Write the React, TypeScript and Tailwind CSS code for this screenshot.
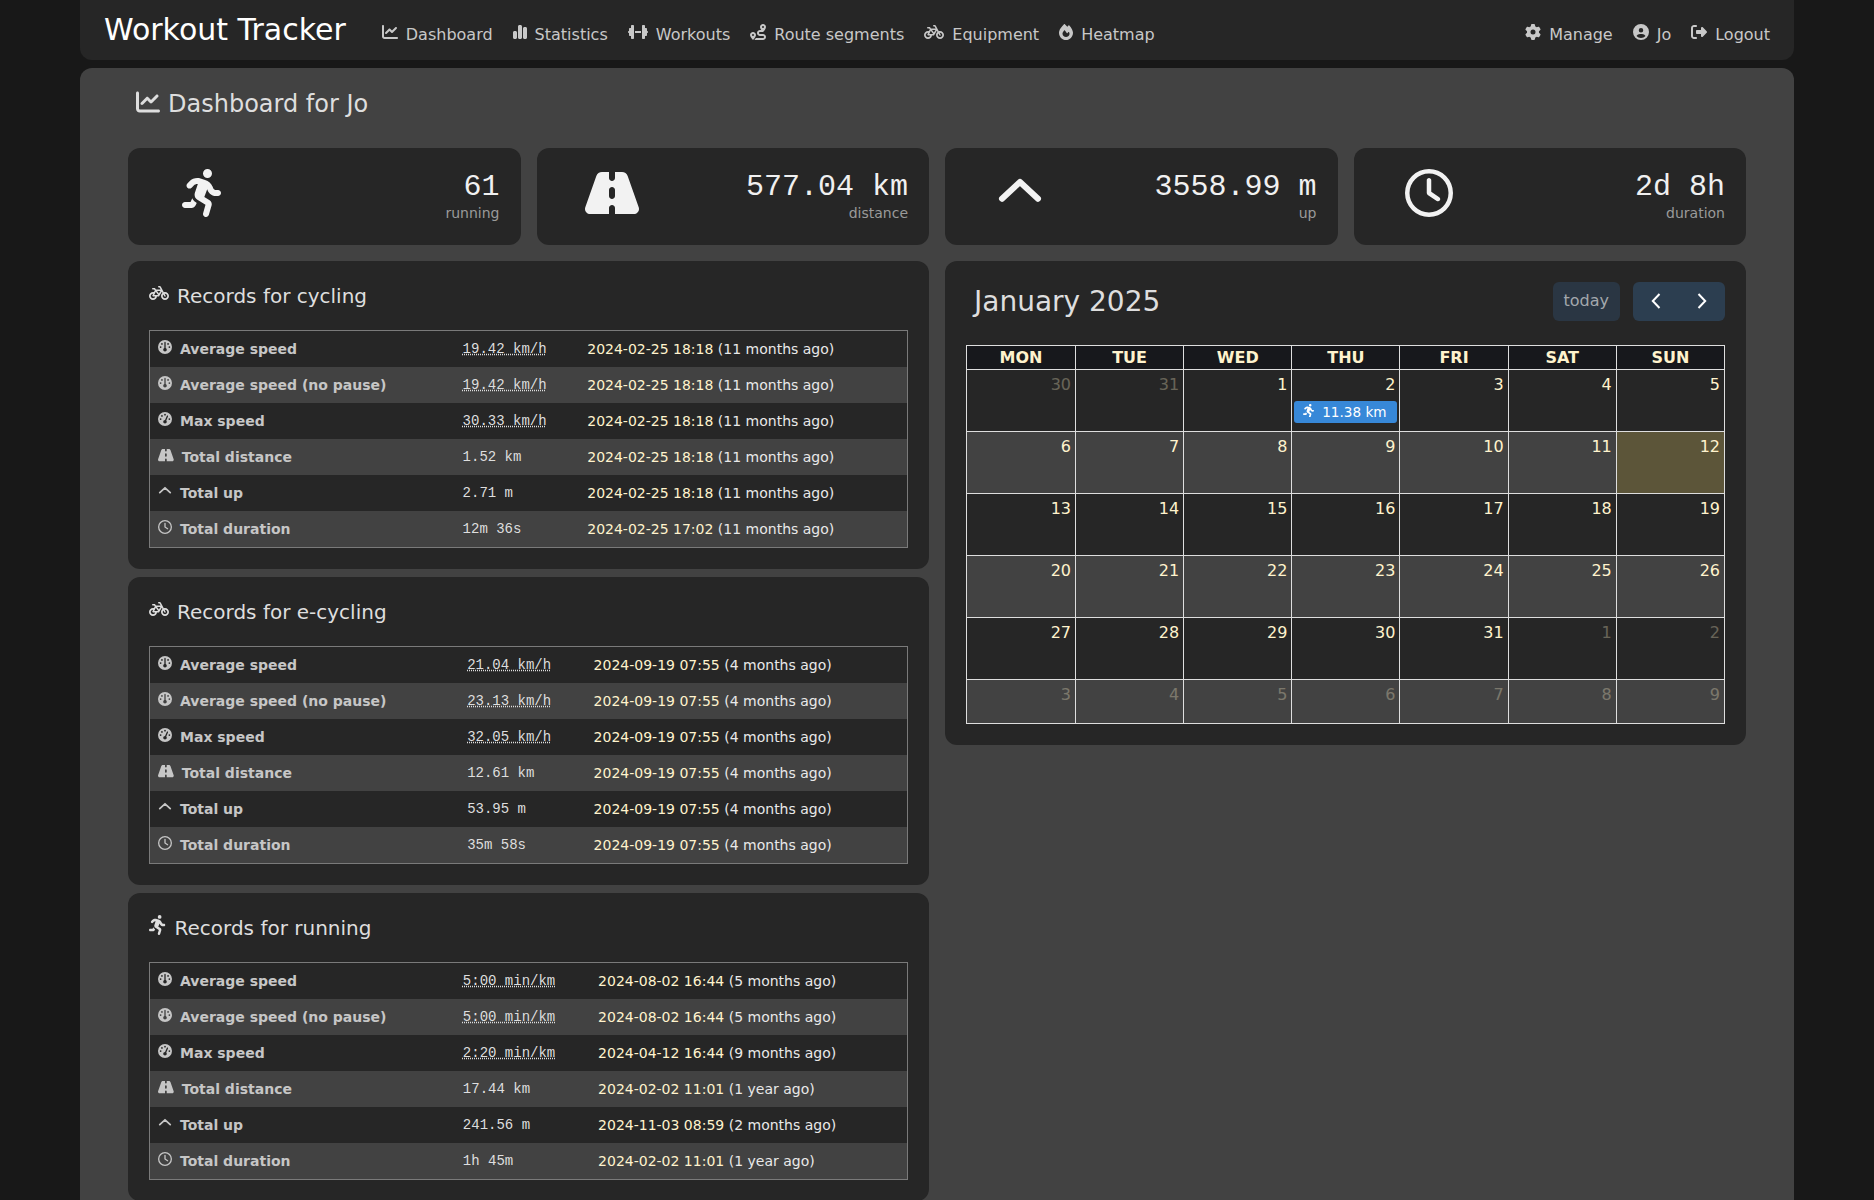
import React from 'react';
import type { IconType } from 'react-icons';
import {
  FaBicycle,
  FaChartLine,
  FaChartSimple,
  FaCircleUser,
  FaDumbbell,
  FaFire,
  FaGauge,
  FaGaugeHigh,
  FaGear,
  FaPersonRunning,
  FaRegClock,
  FaRightFromBracket,
  FaRoad,
  FaRoute,
} from 'react-icons/fa6';

const SANS = 'font-["DejaVu_Sans",sans-serif]';
const MONO = 'font-["Liberation_Mono",monospace]';

// react-icons forces a square box, so non-square glyphs need their real ratio back
const WIDE = 'aspect-[640/512]';
const ROAD = 'aspect-[576/512]';
const NARROW = 'aspect-[448/512]';

const AngleUp = ({ className }: { className?: string }) => (
  <svg viewBox="0 0 24 24" fill="none" stroke="currentColor" strokeWidth="3" strokeLinecap="round" strokeLinejoin="round" className={className}>
    <path d="M3 14.9 12 6.5l9 8.4" />
  </svg>
);

const Chevron = ({ d }: { d: string }) => (
  <svg viewBox="0 0 10 16" fill="none" stroke="currentColor" strokeWidth="2" className="h-[16px] w-[10px]">
    <path d={d} />
  </svg>
);

type Ic = IconType | typeof AngleUp;

const navLeft: [Ic, string, string][] = [
  [FaChartLine, 'Dashboard', ''],
  [FaChartSimple, 'Statistics', NARROW],
  [FaDumbbell, 'Workouts', WIDE],
  [FaRoute, 'Route segments', ''],
  [FaBicycle, 'Equipment', WIDE],
  [FaFire, 'Heatmap', NARROW],
];

const navRight: [Ic, string, string][] = [
  [FaGear, 'Manage', ''],
  [FaCircleUser, 'Jo', ''],
  [FaRightFromBracket, 'Logout', ''],
];

const stats: [Ic, string, string, string][] = [
  [FaPersonRunning, '61', 'running', NARROW],
  [FaRoad, '577.04 km', 'distance', ROAD],
  [AngleUp, '3558.99 m', 'up', ''],
  [FaRegClock, '2d 8h', 'duration', ''],
];

const labels: [Ic, string, boolean, string][] = [
  [FaGauge, 'Average speed', true, ''],
  [FaGauge, 'Average speed (no pause)', true, ''],
  [FaGaugeHigh, 'Max speed', true, ''],
  [FaRoad, 'Total distance', false, ROAD],
  [AngleUp, 'Total up', false, ''],
  [FaRegClock, 'Total duration', false, ''],
];

const records: { icon: IconType; iconClass: string; title: string; rows: [string, string, string][] }[] = [
  {
    icon: FaBicycle,
    iconClass: `h-4 ${WIDE}`,
    title: 'Records for cycling',
    rows: [
      ['19.42 km/h', '2024-02-25 18:18', '(11 months ago)'],
      ['19.42 km/h', '2024-02-25 18:18', '(11 months ago)'],
      ['30.33 km/h', '2024-02-25 18:18', '(11 months ago)'],
      ['1.52 km', '2024-02-25 18:18', '(11 months ago)'],
      ['2.71 m', '2024-02-25 18:18', '(11 months ago)'],
      ['12m 36s', '2024-02-25 17:02', '(11 months ago)'],
    ],
  },
  {
    icon: FaBicycle,
    iconClass: `h-4 ${WIDE}`,
    title: 'Records for e-cycling',
    rows: [
      ['21.04 km/h', '2024-09-19 07:55', '(4 months ago)'],
      ['23.13 km/h', '2024-09-19 07:55', '(4 months ago)'],
      ['32.05 km/h', '2024-09-19 07:55', '(4 months ago)'],
      ['12.61 km', '2024-09-19 07:55', '(4 months ago)'],
      ['53.95 m', '2024-09-19 07:55', '(4 months ago)'],
      ['35m 58s', '2024-09-19 07:55', '(4 months ago)'],
    ],
  },
  {
    icon: FaPersonRunning,
    iconClass: `h-5 ${NARROW}`,
    title: 'Records for running',
    rows: [
      ['5:00 min/km', '2024-08-02 16:44', '(5 months ago)'],
      ['5:00 min/km', '2024-08-02 16:44', '(5 months ago)'],
      ['2:20 min/km', '2024-04-12 16:44', '(9 months ago)'],
      ['17.44 km', '2024-02-02 11:01', '(1 year ago)'],
      ['241.56 m', '2024-11-03 08:59', '(2 months ago)'],
      ['1h 45m', '2024-02-02 11:01', '(1 year ago)'],
    ],
  },
];

const days = ['MON', 'TUE', 'WED', 'THU', 'FRI', 'SAT', 'SUN'];

const weeks: number[][] = [
  [30, 31, 1, 2, 3, 4, 5],
  [6, 7, 8, 9, 10, 11, 12],
  [13, 14, 15, 16, 17, 18, 19],
  [20, 21, 22, 23, 24, 25, 26],
  [27, 28, 29, 30, 31, 1, 2],
  [3, 4, 5, 6, 7, 8, 9],
];

const isOutside = (w: number, d: number) => (w === 0 && d > 20) || (w >= 4 && d < 10);

const NavLink = ({ icon: Icon, label, ratio }: { icon: Ic; label: string; ratio: string }) => (
  <a className="flex items-center text-base text-[#c8c8c8]">
    <Icon className={`mr-[8px] -mt-[5px] h-4 w-auto ${ratio}`} />
    {label}
  </a>
);

const RecordsCard = ({ icon: Icon, iconClass, title, rows }: (typeof records)[number]) => (
  <div className="rounded-xl bg-[#262626] px-[21px] pt-[20px] pb-[21px]">
    <h5 className="flex h-[24px] items-center pt-[5px] text-xl leading-6 text-[#dedede]">
      <Icon className={`mr-[8px] -mt-[5px] w-auto ${iconClass}`} />
      {title}
    </h5>
    <table className="mt-[25px] w-full border-separate border-spacing-0 border border-[#7a7a7a] text-sm">
      <tbody>
        {rows.map((row, i) => {
          const [LabelIcon, label, dotted, labelRatio] = labels[i];
          return (
            <tr key={i} className={i % 2 === 0 ? 'h-9 bg-[#262626]' : 'h-9 bg-[#424242]'}>
              <td className="px-2 font-bold whitespace-nowrap text-[#c6c6c6]">
                <span className="flex items-center">
                  <LabelIcon className={`mr-[8px] -mt-[5px] h-3.5 w-auto ${labelRatio}`} />
                  {label}
                </span>
              </td>
              <td className={`px-2 whitespace-pre ${MONO} text-[#dedede]`}>
                {dotted ? <span className="underline decoration-dotted">{row[0]}</span> : row[0]}
              </td>
              <td className="px-2 whitespace-nowrap text-[#e9e9e9]">
                <span className="text-[#fff3cd]">{row[1]}</span> {row[2]}
              </td>
            </tr>
          );
        })}
      </tbody>
    </table>
  </div>
);

const Calendar = () => (
  <div className="rounded-xl bg-[#262626] p-[21px]">
    <div className="mb-[23px] flex h-[40px] items-center justify-between">
      <h2 className="pl-[8px] text-[28px] leading-none text-[#dedede]">January 2025</h2>
      <div className="-mt-[2px] flex gap-[13px]">
        <button className="h-[39px] rounded-md bg-[#2a3643] px-[11px] text-base text-[#a3a8ad]">today</button>
        <div className="flex h-[39px] overflow-hidden rounded-md bg-[#2c3e50] text-white">
          <span className="flex w-[46px] items-center justify-center"><Chevron d="M8.5 1 1.8 8l6.7 7" /></span>
          <span className="flex w-[46px] items-center justify-center"><Chevron d="M1.5 1l6.7 7-6.7 7" /></span>
        </div>
      </div>
    </div>
    <table className="w-full table-fixed border-collapse border border-[#dedede]">
      <thead>
        <tr className="h-[24px] bg-[#17181c]">
          {days.map((d, i) => (
            <th key={d} className={`border border-[#dedede] text-center text-base leading-none font-bold text-[#fff3cd] ${i === 0 ? 'w-[109px]' : ''}`}>{d}</th>
          ))}
        </tr>
      </thead>
      <tbody>
        {weeks.map((week, w) => (
          <tr key={w} className={`${w % 2 === 1 ? 'bg-[#424242]' : 'bg-[#262626]'} ${w === 5 ? 'h-[44px]' : 'h-[62px]'}`}>
            {week.map((d, i) => (
              <td key={i} className={`border border-[#dedede] p-0 align-top ${w === 1 && i === 6 ? 'bg-[#5c5539]' : ''}`}>
                <div className={`px-[4px] pt-[3px] text-right text-base leading-6 text-[#fff3cd] ${isOutside(w, d) ? 'opacity-30' : ''}`}>{d}</div>
                {w === 0 && i === 3 && (
                  <div className="mx-[2px] mt-[4px] flex h-[22px] items-center rounded-[3px] bg-[#3788d8] pl-[9px] text-[13.6px] text-white">
                    <FaPersonRunning className={`mr-[7px] -mt-[3px] h-[13.6px] w-auto ${NARROW}`} />
                    11.38 km
                  </div>
                )}
              </td>
            ))}
          </tr>
        ))}
      </tbody>
    </table>
  </div>
);

export default function App() {
  return (
    <div className={`h-screen overflow-hidden bg-[#181818] px-20 ${SANS}`}>
      <nav className="flex h-[60px] items-center justify-between rounded-b-xl bg-[#262626] px-6">
        <div className="flex items-center">
          <span className="mr-[36px] text-3xl leading-9 text-white">Workout Tracker</span>
          <div className="flex gap-[20px] pt-[9px]">
            {navLeft.map(([icon, label, ratio]) => <NavLink key={label} icon={icon} label={label} ratio={ratio} />)}
          </div>
        </div>
        <div className="flex gap-[20px] pt-[9px]">
          {navRight.map(([icon, label, ratio]) => <NavLink key={label} icon={icon} label={label} ratio={ratio} />)}
        </div>
      </nav>
      <main className="mt-2 h-[1200px] rounded-t-xl bg-[#424242] px-12">
        <h4 className="flex h-[80px] items-center pb-[8px] pl-2 text-2xl text-[#dedede]">
          <FaChartLine className="mr-[8px] -mt-[5px] h-6 w-auto" />
          Dashboard for Jo
        </h4>
        <div className="grid grid-cols-4 gap-4">
          {stats.map(([Icon, value, label, ratio]) => (
            <div key={label} className="flex h-[97px] rounded-xl bg-[#262626] pr-[21px]">
              <div className="flex w-[150px] items-center justify-center pb-[7px]">
                <Icon className={`h-12 w-auto text-[#f2f2f2] ${ratio}`} />
              </div>
              <div className="flex flex-1 flex-col items-end pt-[21px]">
                <span className={`${MONO} text-3xl leading-9 text-[#f0f0f0]`}>{value}</span>
                <span className="-mt-[4px] text-sm leading-6 text-[#9a9a9a]">{label}</span>
              </div>
            </div>
          ))}
        </div>
        <div className="mt-4 grid grid-cols-2 items-start gap-4">
          <div className="flex flex-col gap-2">
            {records.map((r) => <RecordsCard key={r.title} {...r} />)}
          </div>
          <Calendar />
        </div>
      </main>
    </div>
  );
}
